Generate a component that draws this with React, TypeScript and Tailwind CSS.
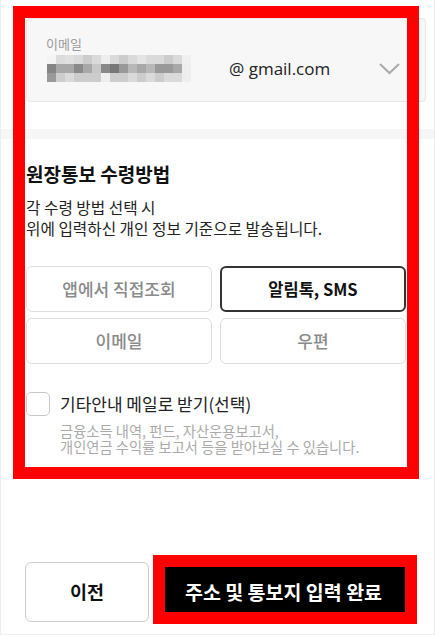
import React from "react";

const rows: string[][] = [
  ["#f4f4f4", "#dcdcdc", "#e0e0e0", "#dadada", "#cccccc", "#dadada", "#eeeeee", "#dadada", "#cccccc", "#dadada", "#e4e4e4", "#dadada", "#dadada", "#cccccc", "#dadada", "#f0f0f0"],
  ["#858585", "#a8a8a8", "#a8a8a8", "#8a8a8a", "#a8a8a8", "#c8c8c8", "#888888", "#777777", "#999999", "#b8b8b8", "#a8a8a8", "#b8b8b8", "#999999", "#999999", "#a8a8a8", "#eeeeee"],
  ["#999999", "#cccccc", "#dadada", "#cccccc", "#cccccc", "#cccccc", "#eeeeee", "#cccccc", "#cccccc", "#dadada", "#cccccc", "#dadada", "#cccccc", "#dadada", "#dadada", "#eeeeee"],
];

function Pixelated() {
  return (
    <svg width="144" height="27" viewBox="0 0 144 27" className="block">
      {rows.map((r, y) =>
        r.map((c, x) => <rect key={`${x}-${y}`} x={x * 9} y={y * 9} width="9" height="9" fill={c} />)
      )}
    </svg>
  );
}

export default function App() {
  const kr = { fontFamily: '"Noto Sans CJK KR", "Noto Sans", sans-serif' };
  return (
    <div
      className="relative w-[435px] h-[635px] bg-white border-x border-b border-[#eeeeee] flex flex-col overflow-hidden"
      style={kr}
    >
      {/* email box */}
      <div className="pt-[18px] pl-[25px]">
        <div className="h-[84px] w-[400px] bg-[#f7f7f7] border border-[#e8e8e8] rounded-[4px] pl-[19px] pt-[16px]">
          <div className="text-[13px] leading-[18px] text-[#9a9a9a]">이메일</div>
          <div className="flex items-center mt-[2px]">
            <div className="ml-[1px]">
              <Pixelated />
            </div>
            <div
              className="ml-[38px] text-[17px] text-[#222] leading-[24px]"
              style={{ fontFamily: '"Open Sans", "Noto Sans", sans-serif' }}
            >
              @ gmail.com
            </div>
            <svg width="21" height="12" viewBox="0 0 21 12" className="ml-[49px]">
              <polyline points="1,1 10.5,10 20,1" fill="none" stroke="#aaaaaa" strokeWidth="2" />
            </svg>
          </div>
        </div>
      </div>

      {/* band */}
      <div className="mt-[27px] h-[10px] bg-[#f6f6f6]" />

      {/* section */}
      <div className="pl-[25px] w-[405px]">
        <div className="mt-[22px] text-[19px] leading-[26px] font-bold text-[#111]">원장통보 수령방법</div>
        <div className="mt-[10px] text-[15.7px] leading-[21px] text-[#222]">
          <div>각 수령 방법 선택 시</div>
          <div>위에 입력하신 개인 정보 기준으로 발송됩니다.</div>
        </div>
        <div className="mt-[27px] grid grid-cols-2 gap-x-[8px] gap-y-[6px]">
          <div className="h-[46px] rounded-[6px] border border-[#dddddd] flex items-center justify-center text-[17px] font-medium text-[#8a8a8a]">
            앱에서 직접조회
          </div>
          <div className="h-[46px] rounded-[6px] border-2 border-[#333333] flex items-center justify-center text-[16.5px] font-bold text-[#111]">
            알림톡, SMS
          </div>
          <div className="h-[46px] rounded-[6px] border border-[#dddddd] flex items-center justify-center text-[17px] font-medium text-[#8a8a8a]">
            이메일
          </div>
          <div className="h-[46px] rounded-[6px] border border-[#dddddd] flex items-center justify-center text-[17px] font-medium text-[#8a8a8a]">
            우편
          </div>
        </div>
        <div className="mt-[28px] flex items-center">
          <div className="w-[24px] h-[24px] rounded-[5px] border border-[#c8c8c8] bg-white" />
          <div className="ml-[10px] text-[17px] leading-[22px] text-[#222]">기타안내 메일로 받기(선택)</div>
        </div>
        <div className="mt-[7px] ml-[34px] text-[14.3px] leading-[16px] text-[#aaaaaa]">
          <div>금융소득 내역, 펀드, 자산운용보고서,</div>
          <div>개인연금 수익률 보고서 등을 받아보실 수 있습니다.</div>
        </div>
      </div>

      {/* bottom buttons */}
      <div className="mt-auto pb-[12px] pl-[24px] flex gap-[8px]">
        <div className="w-[124px] h-[60px] rounded-[6px] border border-[#cccccc] bg-white flex items-center justify-center text-[18.5px] font-bold text-[#111]">
          이전
        </div>
        <div className="w-[253px] h-[60px] bg-black flex items-center justify-center text-[19.5px] font-bold text-white">
          주소 및 통보지 입력 완료
        </div>
      </div>

      {/* red annotation overlays */}
      <div className="pointer-events-none absolute left-[12px] top-[6px] w-[406px] h-[473px] border-[12px] border-[#ff0000]" />
      <div className="pointer-events-none absolute left-[152px] top-[555px] w-[264px] h-[69px] border-[12px] border-[#ff0000]" />
    </div>
  );
}
